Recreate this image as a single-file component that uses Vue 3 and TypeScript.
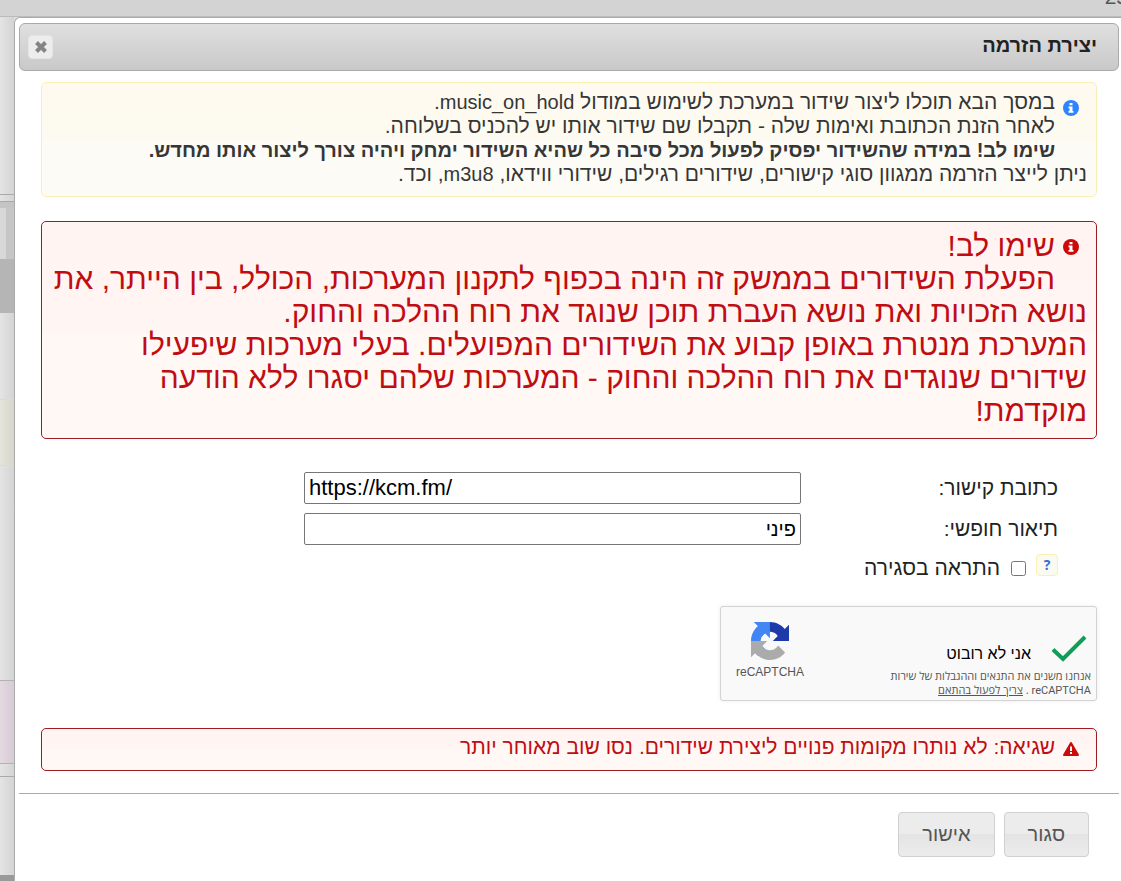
<script setup lang="ts">
import { ref } from 'vue'

const url = ref('https://kcm.fm/')
const description = ref('פיני')
const notify = ref(false)
const strips: string[] = ['head', 'gap', 'band', 'tab', 'dark', 'plain-a', 'yellow', 'plain-b', 'pink', 'row', 'plain-c', 'foot']
</script>

<template>
  <div class="page" dir="rtl">
    <div class="topbar"><span>25</span></div>
    <div class="stage">
      <section class="dialog" role="dialog" aria-labelledby="dialog-title">
        <header class="titlebar">
          <h1 id="dialog-title">יצירת הזרמה</h1>
          <button class="close" type="button" aria-label="סגירה">
            <svg width="16" height="16" viewBox="0 0 16 16"><path d="M3.500 3.500 L12.500 12.500 M12.500 3.500 L3.500 12.500" stroke="#858585" stroke-width="4" /></svg>
          </button>
        </header>

        <div class="content">
          <div class="box info">
            <svg class="icon" width="16" height="16" viewBox="0 0 16 16"><circle cx="8" cy="8" r="8" fill="#2e83ff" /><path d="M6.500 3h3v2.200h-3zM5.500 6.500h4V11h1v1.800h-5V11h1V8.300h-1z" fill="#fff" /></svg>
            <p class="indent">במסך הבא תוכלו ליצור שידור במערכת לשימוש במודול <span class="lat" dir="ltr">music_on_hold</span>.</p>
            <p class="indent">לאחר הזנת הכתובת ואימות שלה - תקבלו שם שידור אותו יש להכניס בשלוחה.</p>
            <p class="indent"><b>שימו לב! במידה שהשידור יפסיק לפעול מכל סיבה כל שהיא השידור ימחק ויהיה צורך ליצור אותו מחדש.</b></p>
            <p>ניתן לייצר הזרמה ממגוון סוגי קישורים, שידורים רגילים, שידורי ווידאו, <span class="lat">m3u8</span>, וכד.</p>
          </div>

          <div class="box error warning">
            <svg class="icon" width="16" height="16" viewBox="0 0 16 16"><circle cx="8" cy="8" r="8" fill="#cd0a0a" /><path d="M6.500 3h3v2.200h-3zM5.500 6.500h4V11h1v1.800h-5V11h1V8.300h-1z" fill="#fff" /></svg>
            <p class="indent">שימו לב!</p>
            <p class="first-line">הפעלת השידורים בממשק זה הינה בכפוף לתקנון המערכות, הכולל, בין הייתר, את נושא הזכויות ואת נושא העברת תוכן שנוגד את רוח ההלכה והחוק.</p>
            <p>המערכת מנטרת באופן קבוע את השידורים המפועלים. בעלי מערכות שיפעילו שידורים שנוגדים את רוח ההלכה והחוק - המערכות שלהם יסגרו ללא הודעה מוקדמת!</p>
          </div>

          <form class="form" @submit.prevent>
            <div class="field">
              <label for="url">כתובת קישור:</label>
              <input id="url" v-model="url" type="text" dir="ltr" />
            </div>
            <div class="field">
              <label for="desc">תיאור חופשי:</label>
              <input id="desc" v-model="description" class="hebrew" type="text" />
            </div>
            <div class="check">
              <button class="help" type="button" aria-label="עזרה">?</button>
              <input id="notify" v-model="notify" type="checkbox" />
              <label for="notify">התראה בסגירה</label>
            </div>
          </form>

          <div class="captcha">
            <div class="verify">
              <div class="verified">
                <svg width="36" height="28" viewBox="0 0 36 28"><path d="M2 14.500 L12 24 L34 2" fill="none" stroke="#0f9d58" stroke-width="4" /></svg>
                <span>אני לא רובוט</span>
              </div>
              <p>אנחנו משנים את התנאים וההגבלות של שירות <span class="rob">reCAPTCHA</span> . <a href="#">צריך לפעול בהתאם</a></p>
            </div>
            <div class="brand">
              <svg width="38" height="38" viewBox="0 0 64 64">
                <path d="M64 31.955l-.033-1.370V4.687l-7.160 7.160C50.948 4.674 42.033.093 32.050.093c-10.400 0-19.622 4.960-25.458 12.640l11.736 11.860a15.550 15.550 0 0 1 4.754-5.334c2.050-1.600 4.952-2.906 8.968-2.906.485 0 .860.057 1.135.163 4.976.393 9.288 3.140 11.828 7.124l-8.307 8.307L64 31.953" fill="#1c3aa9" />
                <path d="M31.862.094l-1.370.033H4.594l7.160 7.160C4.580 13.147 0 22.060 0 32.046c0 10.400 4.960 19.622 12.640 25.458L24.500 45.768a15.550 15.550 0 0 1-5.334-4.754c-1.600-2.050-2.906-4.952-2.906-8.968 0-.485.057-.860.163-1.135.393-4.976 3.140-9.288 7.124-11.828l8.307 8.307L31.860.095" fill="#4285f4" />
                <path d="M.001 32.045l.033 1.370v25.898l7.160-7.160c5.860 7.173 14.774 11.754 24.760 11.754 10.400 0 19.622-4.960 25.458-12.640l-11.736-11.860a15.550 15.550 0 0 1-4.754 5.334c-2.050 1.600-4.952 2.906-8.968 2.906-.485 0-.860-.057-1.135-.163-4.976-.393-9.288-3.140-11.828-7.124l8.307-8.307-27.298.083" fill="#ababab" />
              </svg>
              <span>reCAPTCHA</span>
            </div>
          </div>

          <div class="box error alert">
            <svg class="icon" width="16" height="14" viewBox="0 0 16 14"><path d="M8 1 L15 13 H1 Z" fill="#cd0a0a" stroke="#cd0a0a" stroke-width="2" stroke-linejoin="round" /><path d="M7 4.500h2v4.500H7zM7 10h2v2H7z" fill="#fff" /></svg>
            <p class="indent">שגיאה: לא נותרו מקומות פנויים ליצירת שידורים. נסו שוב מאוחר יותר</p>
          </div>
        </div>

        <footer class="actions">
          <button type="button">סגור</button>
          <button type="button">אישור</button>
        </footer>
      </section>
      <div class="behind" aria-hidden="true">
        <div v-for="s in strips" :key="s" :class="s"></div>
      </div>
    </div>
  </div>
</template>

<style>
body { margin: 0; background: #e0e0e0; }
</style>

<style scoped>
* { box-sizing: border-box; }
p, h1 { margin: 0; }
.page {
  min-height: 100vh;
  display: flex;
  flex-direction: column;
  overflow: hidden;
  color: #222;
  font: 21px/24px "Liberation Sans", Arial, sans-serif;
}
.lat { font-size: 20px; }
.rob { font-family: Roboto, sans-serif; }
.topbar {
  height: 17px;
  overflow: hidden;
  background: #d3d3d3;
  border-bottom: 1px solid #bbb;
  color: #555;
}
.topbar span { display: block; margin: -15px -7px 0 0; }
.stage { flex: 1; display: flex; }
.dialog {
  flex: 1;
  min-width: 0;
  background: #fff;
  border: solid #aaa;
  border-width: 1px 0 0 1px;
  border-radius: 6px 0 0 0;
  padding: 5px 2px 0 4px;
}
.titlebar {
  height: 48px;
  display: flex;
  align-items: center;
  justify-content: space-between;
  padding: 0 21px 0 8px;
  border: 1px solid #aaa;
  border-radius: 6px;
  background: linear-gradient(#e0e0e0, #c9c9c9);
}
h1 { padding-bottom: 4px; font-size: 20px; line-height: 24px; font-weight: 700; }
.close {
  width: 25px;
  height: 24px;
  display: grid;
  place-items: center;
  padding: 0;
  border: 1px solid #e4e4e4;
  border-radius: 4px;
  background: #ededed;
}
.content { padding: 11px 22px 22px; }
.box { position: relative; border: 1px solid; border-radius: 5px; }
.box .icon { position: absolute; right: 17px; top: 17px; }
.indent { padding-right: 32px; }
.first-line { text-indent: 32px; }
.info {
  padding: 7px 9px 10px;
  border-color: #fbf0b4;
  background: linear-gradient(#fffaf0, #fdfaf1 50%, #fcfbf5 52%);
  color: #363636;
}
.info b { font-size: 20px; }
.error {
  border-color: #a01c24;
  background: linear-gradient(#fff4f1, #fff5f2 50%, #fff8f5 52%);
  color: #c00d12;
}
.warning { margin-top: 24px; padding: 7px 9px 11px; font-size: 30px; line-height: 33px; }
.form { padding: 33px 39px 0; }
.field { display: flex; margin-bottom: 9px; }
.field label { width: 257px; line-height: 32px; }
.field input {
  width: 497px;
  height: 32px;
  padding: 1px 4px;
  border: 1px solid #767676;
  border-radius: 2px;
  background: #fff;
  color: #000;
  font-family: inherit;
  font-size: 22px;
}
.field .hebrew { font-size: 20px; }
.check { display: flex; align-items: center; height: 25px; }
.check label { padding-top: 2px; }
.help {
  width: 22px;
  height: 22px;
  margin-bottom: 3px;
  padding: 0;
  border: 1px solid #fbf0b4;
  border-radius: 4px;
  background: #fbfaf0;
  color: #2e6fe0;
  font: bold 14px/20px "Open Sans", sans-serif;
}
.check input { width: 15px; height: 15px; margin: 4px 10px 0 11px; }
.captcha {
  display: flex;
  justify-content: space-between;
  width: 377px;
  height: 95px;
  margin-top: 27px;
  padding: 0 5px 0 15px;
  border: 1px solid #d3d3d3;
  border-radius: 3px;
  background: #f9f9f9;
  box-shadow: 0 0 4px rgba(0, 0, 0, 0.08);
}
.verify { width: 204px; padding-top: 28px; }
.verified { display: flex; gap: 20px; padding-right: 4px; color: #000; font-size: 16px; line-height: 38px; height: 34px; }
.verify p { color: #555; font: 11px/14px "Open Sans", sans-serif; }
.verify a { color: inherit; }
.brand {
  display: flex;
  flex-direction: column;
  align-items: center;
  padding-top: 15px;
  color: #555;
  font-size: 12px;
  line-height: 24px;
}
.alert { margin-top: 27px; padding: 6px 9px 11px; }
.alert .icon { top: 13px; }
.actions {
  display: flex;
  gap: 9px;
  padding: 18px 30px 24px;
  border-top: 1px solid #aaa;
}
.actions button {
  height: 45px;
  padding: 0 23px;
  border: 1px solid #d0d0d0;
  border-radius: 4px;
  background: linear-gradient(#ececec 50%, #e4e4e4 50%, #ececec);
  color: #555;
  font-family: inherit;
  font-size: 20px;
}
.behind { width: 14px; display: flex; flex-direction: column; background: linear-gradient(90deg, #e4e4e4, #d4d4d4); }
.head { height: 178px; border-bottom: 1px solid #aaa; }
.gap { height: 7px; border-bottom: 1px solid #aaa; }
.band { height: 6px; background: #c4c4c4; }
.tab { height: 51px; background: linear-gradient(90deg, #d8d8d8 6px, #c6c6c6 6px); }
.dark { height: 54px; background: #b5b5b5; }
.plain-a { height: 86px; }
.yellow { height: 67px; border: solid #e6dcae; border-width: 1px 0; background: linear-gradient(90deg, #e5e4d8, #d6d6cd); }
.plain-b { height: 214px; }
.pink { height: 84px; border: solid #b5b0b4; border-width: 1px 0; background: linear-gradient(90deg, #e4d8e1, #d6ccd4); }
.row { height: 13px; border-bottom: 1px solid #aaa; }
.plain-c { height: 98px; }
.foot { flex: 1; background: #999; }
</style>
